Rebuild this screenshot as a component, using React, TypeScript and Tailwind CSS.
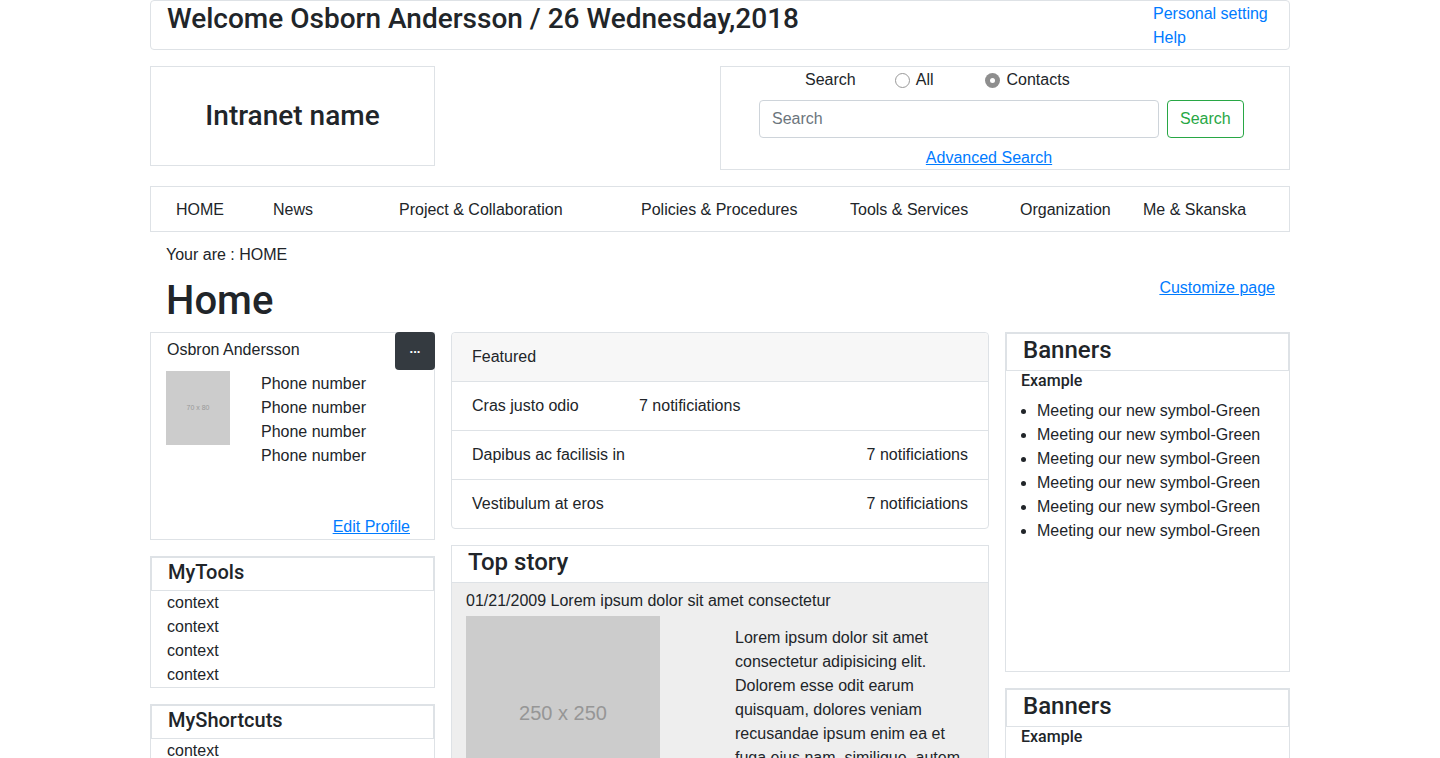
import React from "react";

const font = { fontFamily: '"Liberation Sans", Arial, sans-serif' };
const head = "font-['Roboto',_'Liberation_Sans',_sans-serif] font-medium";

function SideCard({ title, items }: { title: string; items: string[] }) {
  return (
    <div className="border border-[#dee2e6]">
      <div className="border border-[#dee2e6] h-[34px] pl-4 pb-[5px] flex items-center">
        <h5 className={"text-[20px] leading-6 " + head}>{title}</h5>
      </div>
      {items.map((t, i) => (
        <div key={i} className="pl-4 leading-6">
          {t}
        </div>
      ))}
    </div>
  );
}

function Banners({ height }: { height?: string }) {
  return (
    <div className={"border border-[#dee2e6] " + (height || "")}>
      <div className="border border-[#dee2e6] h-[38px] pl-4 pb-[5px] flex items-center">
        <h4 className={"text-[24px] leading-7 " + head}>Banners</h4>
      </div>
      <div className={"pl-[15px] leading-5 " + head}>Example</div>
      <ul className="list-disc pl-[31px] mt-2 leading-6">
        {[0, 1, 2, 3, 4, 5].map((i) => (
          <li key={i}>Meeting our new symbol-Green</li>
        ))}
      </ul>
    </div>
  );
}

export default function App() {
  const nav = [
    ["HOME", "w-[97px]"],
    ["News", "w-[126px]"],
    ["Project & Collaboration", "w-[242px]"],
    ["Policies & Procedures", "w-[209px]"],
    ["Tools & Services", "w-[170px]"],
    ["Organization", "w-[123px]"],
    ["Me & Skanska", "w-auto"],
  ];

  return (
    <div className="min-h-screen bg-white text-[#212529] text-base leading-6" style={font}>
      <div className="w-[1140px] mx-auto">
        {/* top bar */}
        <div className="h-[50px] border border-[#dee2e6] rounded flex justify-between pl-4 pr-[19px]">
          <h3 className={"text-[28px] leading-9 " + head}>
            Welcome Osborn Andersson / 26 Wednesday,2018
          </h3>
          <div className="flex flex-col pt-px text-[#007bff] w-[117px]">
            <a>Personal setting</a>
            <a>Help</a>
          </div>
        </div>

        {/* logo + search */}
        <div className="flex items-start mt-4">
          <div className="w-[285px] h-[100px] border border-[#dee2e6] flex items-center justify-center">
            <h3 className={"text-[28px] " + head}>Intranet name</h3>
          </div>
          <div className="ml-[285px] w-[570px] h-[104px] border border-[#dee2e6] flex flex-col">
            <div className="flex items-center h-[24px] mt-[1px] pl-[84px]">
              <span>Search</span>
              <label className="flex items-center ml-[39px]">
                <span className="w-[15px] h-[15px] rounded-full border border-[#999] bg-white" />
                <span className="ml-[6px]">All</span>
              </label>
              <label className="flex items-center ml-[52px]">
                <span className="w-[15px] h-[15px] rounded-full bg-[#8e8e8e] flex items-center justify-center">
                  <span className="w-[5px] h-[5px] rounded-full bg-white" />
                </span>
                <span className="ml-[6px]">Contacts</span>
              </label>
            </div>
            <div className="flex items-center mt-[8px] pl-[38px]">
              <div className="w-[400px] h-[38px] border border-[#ced4da] rounded flex items-center px-3 text-[#6c757d]">
                Search
              </div>
              <button className="ml-[8px] h-[38px] px-3 border border-[#28a745] rounded text-[#28a745]">
                Search
              </button>
            </div>
            <div className="text-center mt-[8px] pr-8">
              <a className="text-[#007bff] underline">Advanced Search</a>
            </div>
          </div>
        </div>

        {/* nav */}
        <div className="mt-4 h-[46px] border border-[#dee2e6] flex items-center pl-[25px] pt-px">
          {nav.map(([t, w]) => (
            <div key={t} className={w}>
              {t}
            </div>
          ))}
        </div>

        <div className="pl-4 mt-[11px]">Your are : HOME</div>
        <div className="flex items-center justify-between pl-4 pr-[15px] mt-[10px] h-[48px]">
          <h1 className={"text-[40px] leading-[48px] " + head}>Home</h1>
          <a className="text-[#007bff] underline -mt-[26px]">Customize page</a>
        </div>

        {/* main columns */}
        <div className="flex gap-4 mt-[7px]">
          {/* left */}
          <div className="w-[285px] flex flex-col gap-4">
            <div className="relative h-[208px] border border-[#dee2e6] flex flex-col">
              <div className="pl-4 pt-[5px] leading-6">Osbron Andersson</div>
              <button className="absolute -top-px -right-px w-[40px] h-[38px] rounded bg-[#343a40] text-white text-[13px] font-bold leading-none pb-[6px]">
                ...
              </button>
              <div className="flex mt-[9px] pl-[15px]">
                <div className="w-[64px] h-[74px] bg-[#cccccc] flex items-center justify-center text-[7px] text-[#999]">
                  70 x 80
                </div>
                <div className="ml-[31px] mt-[1px]">
                  <div>Phone number</div>
                  <div>Phone number</div>
                  <div>Phone number</div>
                  <div>Phone number</div>
                </div>
              </div>
              <div className="mt-auto text-right pr-[24px]">
                <a className="text-[#007bff] underline">Edit Profile</a>
              </div>
            </div>
            <SideCard title="MyTools" items={["context", "context", "context", "context"]} />
            <SideCard title="MyShortcuts" items={["context", "context", "context", "context"]} />
          </div>

          {/* middle */}
          <div className="w-[538px] flex flex-col gap-4">
            <div className="border border-[#dee2e6] rounded">
              <div className="h-[49px] bg-[#f7f7f7] px-5 flex items-center border-b border-[#dee2e6] rounded-t">
                Featured
              </div>
              <div className="h-[49px] px-5 flex items-center border-b border-[#dee2e6]">
                <span className="w-[167px]">Cras justo odio</span>
                <span>7 notificiations</span>
              </div>
              <div className="h-[49px] px-5 flex items-center justify-between border-b border-[#dee2e6]">
                <span>Dapibus ac facilisis in</span>
                <span>7 notificiations</span>
              </div>
              <div className="h-[48px] px-5 flex items-center justify-between">
                <span>Vestibulum at eros</span>
                <span>7 notificiations</span>
              </div>
            </div>

            <div className="border border-[#dee2e6]">
              <div className="h-[37px] border-b border-[#dee2e6] pl-4 pb-[4px] flex items-center">
                <h4 className={"text-[24px] leading-7 " + head}>Top story</h4>
              </div>
              <div className="bg-[#eeeeee] px-[14px] pt-[6px] pb-4">
                <div>01/21/2009 Lorem ipsum dolor sit amet consectetur</div>
                <div className="flex mt-[3px]">
                  <div className="w-[194px] h-[194px] shrink-0 bg-[#cccccc] flex items-center justify-center text-[20px] text-[#969696]">
                    250 x 250
                  </div>
                  <p className="ml-[75px] mt-[10px] w-[236px]">
                    Lorem ipsum dolor sit amet consectetur adipisicing elit. Dolorem esse odit earum
                    quisquam, dolores veniam recusandae ipsum enim ea et fuga eius nam, similique, autem
                    quod.
                  </p>
                </div>
              </div>
            </div>
          </div>

          {/* right */}
          <div className="w-[285px] flex flex-col gap-4">
            <Banners height="h-[340px]" />
            <Banners />
          </div>
        </div>
      </div>
    </div>
  );
}
